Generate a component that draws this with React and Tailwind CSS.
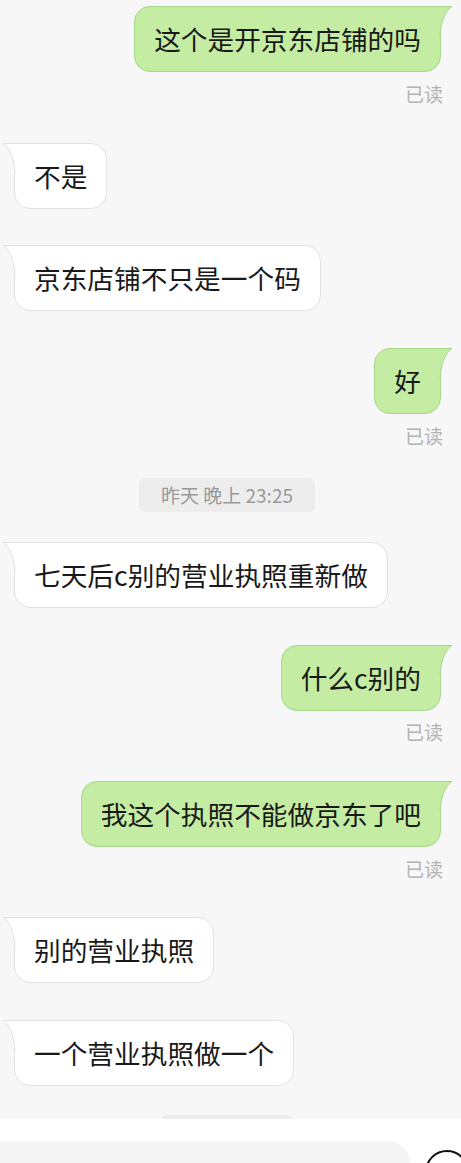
import React from 'react';

const FONT = { fontFamily: '"Noto Sans CJK SC", "Noto Sans", sans-serif' };

const messages = [
  { type: 'msg', side: 'right', text: '这个是开京东店铺的吗', mt: 'mt-[6px]' },
  { type: 'read', mt: 'mt-[11px]' },
  { type: 'msg', side: 'left', text: '不是', mt: 'mt-[38px]' },
  { type: 'msg', side: 'left', text: '京东店铺不只是一个码', mt: 'mt-[36px]' },
  { type: 'msg', side: 'right', text: '好', mt: 'mt-[37px]' },
  { type: 'read', mt: 'mt-[11px]' },
  { type: 'time', text: '昨天 晚上 23:25', mt: 'mt-[31px]' },
  { type: 'msg', side: 'left', text: '七天后c别的营业执照重新做', mt: 'mt-[30px]' },
  { type: 'msg', side: 'right', text: '什么c别的', mt: 'mt-[37px]' },
  { type: 'read', mt: 'mt-[10px]' },
  { type: 'msg', side: 'right', text: '我这个执照不能做京东了吧', mt: 'mt-[38px]' },
  { type: 'read', mt: 'mt-[11px]' },
  { type: 'msg', side: 'left', text: '别的营业执照', mt: 'mt-[37px]' },
  { type: 'msg', side: 'left', text: '一个营业执照做一个', mt: 'mt-[37px]' },
];

const Bubble = ({ side, children }) => {
  const mine = side === 'right';
  const fill = mine ? '#c4eca3' : '#ffffff';
  const stroke = mine ? '#a6d78b' : '#e2e2e2';
  return (
    <div
      className={`relative h-[66px] flex items-center px-[19px] text-[26.7px] leading-none text-[#191919] border rounded-2xl ${
        mine ? 'bg-[#c4eca3] border-[#a6d78b] rounded-tr-none' : 'bg-white border-[#e2e2e2] rounded-tl-none'
      }`}
    >
      {children}
      <svg
        className={`absolute -top-px w-[14px] h-[30px] ${mine ? '-right-[13px]' : '-left-[13px] -scale-x-100'}`}
        viewBox="0 0 14 30"
      >
        <path d="M0 0 H13.5 C7 4 2 14 1 30 H0 Z" fill={fill} />
        <path d="M0 0.5 H13 C7 4 2 14 1 30" fill="none" stroke={stroke} strokeWidth="1" />
      </svg>
    </div>
  );
};

export default function App() {
  return (
    <div className="w-[461px] h-[1163px] overflow-hidden bg-white flex flex-col" style={FONT}>
      <div className="h-[1119px] shrink-0 bg-[#f7f7f7] flex flex-col overflow-hidden">
        {messages.map((m, i) => {
          if (m.type === 'msg') {
            return (
              <div key={i} className={`flex ${m.mt} ${m.side === 'right' ? 'justify-end pr-[20px]' : 'justify-start pl-[14px]'}`}>
                <Bubble side={m.side}>{m.text}</Bubble>
              </div>
            );
          }
          if (m.type === 'read') {
            return (
              <div key={i} className={`${m.mt} text-right pr-[18px] text-[19px] leading-[22px] text-[#b3b3b3]`}>
                已读
              </div>
            );
          }
          return (
            <div key={i} className={`${m.mt} flex justify-center`}>
              <div className="h-[34px] px-[22px] -ml-[7px] flex items-center rounded-md bg-[#ededed] text-[19px] text-[#999999]">
                {m.text}
              </div>
            </div>
          );
        })}
        <div className="mt-[29px] flex justify-center">
          <div className="w-[131px] h-[10px] -ml-[6px] rounded-md bg-[#ededed]" />
        </div>
      </div>
      <div className="flex-1 bg-white flex items-start pt-[22px]">
        <div className="w-[410px] h-[60px] shrink-0 bg-[#f5f5f5] rounded-tr-[22px]" />
        <div className="ml-[15px] mt-[9px] w-[44px] h-[44px] shrink-0 rounded-full border-2 border-[#111]" />
      </div>
    </div>
  );
}
